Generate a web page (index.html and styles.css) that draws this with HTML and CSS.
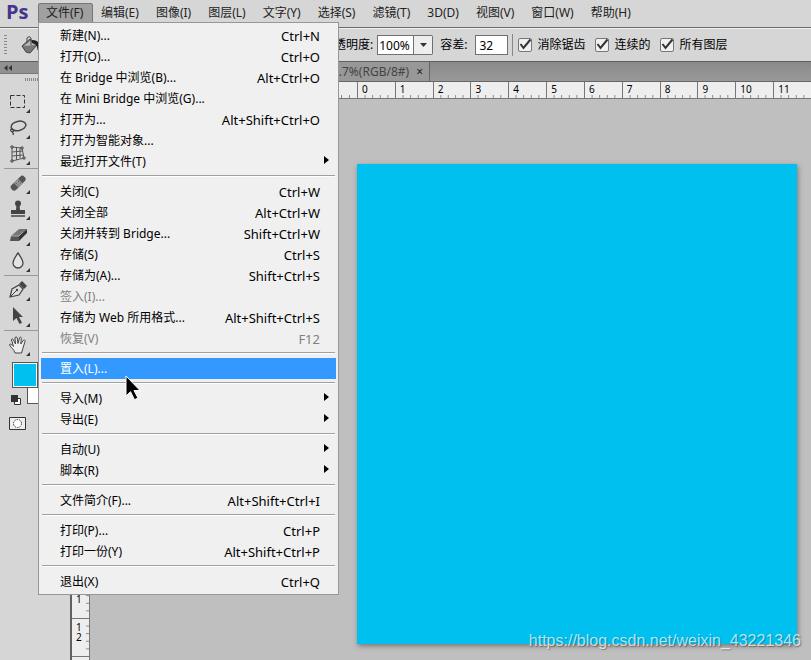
FILE: index.html
```html
<!DOCTYPE html>
<html lang="zh-CN">
<head>
<meta charset="utf-8">
<title>Ps</title>
<link rel="stylesheet" href="styles.css">
</head>
<body>
<div class="app">
  <header class="menubar">
    <span class="logo">Ps</span>
    <nav class="menus">
      <div class="menu-root">
        <button class="menu-title open">文件(F)</button>
        <div class="dropdown">
          <button class="item"><span>新建(N)...</span><kbd>Ctrl+N</kbd></button>
          <button class="item"><span>打开(O)...</span><kbd>Ctrl+O</kbd></button>
          <button class="item"><span>在 Bridge 中浏览(B)...</span><kbd>Alt+Ctrl+O</kbd></button>
          <button class="item"><span>在 Mini Bridge 中浏览(G)...</span></button>
          <button class="item"><span>打开为...</span><kbd>Alt+Shift+Ctrl+O</kbd></button>
          <button class="item"><span>打开为智能对象...</span></button>
          <button class="item sub"><span>最近打开文件(T)</span></button>
          <hr>
          <button class="item"><span>关闭(C)</span><kbd>Ctrl+W</kbd></button>
          <button class="item"><span>关闭全部</span><kbd>Alt+Ctrl+W</kbd></button>
          <button class="item"><span>关闭并转到 Bridge...</span><kbd>Shift+Ctrl+W</kbd></button>
          <button class="item"><span>存储(S)</span><kbd>Ctrl+S</kbd></button>
          <button class="item"><span>存储为(A)...</span><kbd>Shift+Ctrl+S</kbd></button>
          <button class="item" disabled><span>签入(I)...</span></button>
          <button class="item"><span>存储为 Web 所用格式...</span><kbd>Alt+Shift+Ctrl+S</kbd></button>
          <button class="item" disabled><span>恢复(V)</span><kbd>F12</kbd></button>
          <hr>
          <button class="item active"><span>置入(L)...</span>
            <svg class="cursor" width="16" height="26" viewBox="0 0 16 26"><path d="M1 1v20l4.500-4.300 4 8 3.500-1.700-4-7.500h6z" fill="#000" stroke="#fff" stroke-width="1"/></svg>
          </button>
          <hr>
          <button class="item sub"><span>导入(M)</span></button>
          <button class="item sub"><span>导出(E)</span></button>
          <hr>
          <button class="item sub"><span>自动(U)</span></button>
          <button class="item sub"><span>脚本(R)</span></button>
          <hr>
          <button class="item"><span>文件简介(F)...</span><kbd>Alt+Shift+Ctrl+I</kbd></button>
          <hr>
          <button class="item"><span>打印(P)...</span><kbd>Ctrl+P</kbd></button>
          <button class="item"><span>打印一份(Y)</span><kbd>Alt+Shift+Ctrl+P</kbd></button>
          <hr>
          <button class="item"><span>退出(X)</span><kbd>Ctrl+Q</kbd></button>
        </div>
      </div>
      <button class="menu-title">编辑(E)</button>
      <button class="menu-title">图像(I)</button>
      <button class="menu-title">图层(L)</button>
      <button class="menu-title">文字(Y)</button>
      <button class="menu-title">选择(S)</button>
      <button class="menu-title">滤镜(T)</button>
      <button class="menu-title">3D(D)</button>
      <button class="menu-title">视图(V)</button>
      <button class="menu-title">窗口(W)</button>
      <button class="menu-title">帮助(H)</button>
    </nav>
  </header>

  <div class="options">
    <div class="current-tool">
      <span class="grip-v"></span>
      <svg width="20" height="20" viewBox="0 0 20 20"><path d="M1 11 9 4l7 6-7 8-4-1z" fill="#777" stroke="#444"/><path d="M3 11l6-5 5 4z" fill="#bbb"/><path d="M6 8V3q2-3 4 0v7" fill="none" stroke="#444"/><path d="M11 5q6 0 7 4 1 4 0 7-2-1-2-4 0-3-5-4z" fill="#222"/></svg>
    </div>
    <label for="opacity">透明度:</label>
    <div class="combo"><input id="opacity" type="text" value="100%"><button aria-label="透明度"><svg width="7" height="4" viewBox="0 0 7 4"><path d="M0 0h7L3.500 4z" fill="#333"/></svg></button></div>
    <label for="tolerance">容差:</label>
    <input id="tolerance" class="number" type="text" value="32">
    <span class="divider"></span>
    <label class="check"><span class="box"><input type="checkbox" checked><svg width="16" height="16" viewBox="0 0 16 16"><path d="M3.500 7l3 4L13.500 2.500" fill="none" stroke="#333" stroke-width="2"/></svg></span>消除锯齿</label>
    <label class="check"><span class="box"><input type="checkbox" checked><svg width="16" height="16" viewBox="0 0 16 16"><path d="M3.500 7l3 4L13.500 2.500" fill="none" stroke="#333" stroke-width="2"/></svg></span>连续的</label>
    <label class="check"><span class="box"><input type="checkbox" checked><svg width="16" height="16" viewBox="0 0 16 16"><path d="M3.500 7l3 4L13.500 2.500" fill="none" stroke="#333" stroke-width="2"/></svg></span>所有图层</label>
  </div>

  <div class="workspace">
    <aside class="tools">
      <div class="tools-head"><svg width="8" height="6" viewBox="0 0 8 6"><path d="M3.500 0v6L0 3zM8 0v6L4.500 3z" fill="#333"/></svg></div>
      <div class="grip-h"></div>
      <div class="group">
        <button class="tool" aria-label="选框"><svg width="20" height="20" viewBox="0 0 20 20"><rect x="2.500" y="3.500" width="14" height="12" fill="none" stroke="#333" stroke-dasharray="4 2"/></svg></button>
        <button class="tool" aria-label="套索"><svg width="20" height="20" viewBox="0 0 20 20"><ellipse cx="10.500" cy="8" rx="7.500" ry="4.600" transform="rotate(-12 10 8)" fill="none" stroke="#444" stroke-width="1.500"/><path d="M3 11q-1 3 2 2.500 2-1-1-2.500-1 0-1 1M4 14q2 1 1 3" fill="none" stroke="#444" stroke-width="1.300"/></svg></button>
        <button class="tool" aria-label="透视裁剪"><svg width="20" height="20" viewBox="0 0 20 20"><path d="M4 3v14l12-3-2-10zM8.500 3v13M12 4v10M4 8l11-1M4 12l11-1" fill="none" stroke="#555"/><path d="M3 2h2v2H3zM13 3h2v2h-2zM3 16h2v2H3zM15 13h2v2h-2z" fill="#ddd" stroke="#444"/></svg></button>
      </div>
      <div class="group">
        <button class="tool" aria-label="修复画笔"><svg width="20" height="20" viewBox="0 0 20 20"><g transform="rotate(-45 10 10)"><rect x="1" y="7" width="18" height="6.500" rx="3" fill="#555"/><rect x="7" y="7" width="6" height="6.500" fill="#999"/><path d="M8 9h1M11 9h1M8 11.500h1M11 11.500h1" stroke="#444"/></g></svg></button>
        <button class="tool" aria-label="图章"><svg width="20" height="20" viewBox="0 0 20 20"><circle cx="10" cy="4.500" r="3" fill="#444"/><path d="M8.500 6h3l.5 5h5v4H3v-4h5z" fill="#444"/><path d="M3 17h14" stroke="#444" stroke-width="1.500"/></svg></button>
        <button class="tool" aria-label="橡皮擦"><svg width="20" height="20" viewBox="0 0 20 20"><path d="M3 11 11 4h8l-8 7z" fill="#777"/><path d="M3 11h8v5H2z" fill="#555"/><path d="M11 11l8-7v4l-8 8z" fill="#333"/><path d="M3 11h8l4-4" fill="none" stroke="#aaa"/></svg></button>
        <button class="tool" aria-label="模糊"><svg width="20" height="20" viewBox="0 0 20 20"><path d="M10 2q5 7 5 10a5 5 0 0 1-10 0q0-3 5-10z" fill="#e4e4e4" stroke="#444" stroke-width="1.300"/></svg></button>
      </div>
      <div class="group">
        <button class="tool" aria-label="钢笔"><svg width="20" height="20" viewBox="0 0 20 20"><path d="M2 17 4 9l7-4 4 4-4 6z" fill="#ddd" stroke="#444" stroke-width="1.200"/><path d="M11 4l3-3 5 5-3 3z" fill="#444"/><path d="M2 17l6-6" stroke="#444"/><circle cx="9" cy="10" r="1.200" fill="#444"/></svg></button>
        <button class="tool" aria-label="路径选择"><svg width="20" height="20" viewBox="0 0 20 20"><path d="M5 1v14l3.500-3 3 6 2.500-1.300-3-5.700H15z" fill="#444"/></svg></button>
      </div>
      <div class="group last">
        <button class="tool" aria-label="抓手"><svg width="20" height="20" viewBox="0 0 20 20"><path d="M7 18C6 14 3 13 1.500 10c0-1.500 2-1 4 1.500L3.500 5c0-1.500 1.500-1.500 2 0L7.500 9 7 3c0-1.500 2-1.500 2.200 0L10 8.500 11.500 3c.5-1.500 2-1 1.800.5L12.800 9l2.400-3.500c1-1.200 2.300-.5 1.800 1L15 13l-1.500 5z" fill="#eee" stroke="#444"/></svg></button>
      </div>
      <div class="swatches"><span class="bg-color"></span><span class="fg-color"></span></div>
      <div class="extras">
        <svg width="10" height="10" viewBox="0 0 10 10"><path d="M3.500 3.500h6v6h-6z" fill="#fff" stroke="#333"/><path d="M0 0h7v7H0z" fill="#333"/></svg>
        <svg width="17" height="13" viewBox="0 0 17 13"><path d="M.5.5h16v12H.5z" fill="#eee" stroke="#333"/><circle cx="8.500" cy="6.500" r="4" fill="#fff" stroke="#333" stroke-dasharray="1.500 1"/></svg>
      </div>
    </aside>

    <main class="document">
      <div class="tabs"><div class="tab"><span>.7%(RGB/8#)</span><button aria-label="关闭">×</button></div></div>
      <div class="ruler-x">
        <span class="lead"></span>
        <div class="units"><span>0</span><span>1</span><span>2</span><span>3</span><span>4</span><span>5</span><span>6</span><span>7</span><span>8</span><span>9</span><span>10</span><span>11</span></div>
      </div>
      <div class="stage">
        <div class="ruler-y">
          <span></span><span></span><span></span><span></span><span></span><span></span><span></span><span></span><span></span><span></span><span></span><span><br>1</span><span>1<br>2</span><span></span>
        </div>
        <div class="canvas"><div class="artboard"></div></div>
      </div>
    </main>
  </div>
  <span class="watermark">https://blog.csdn.net/weixin_43221346</span>
</div>
</body>
</html>
```

FILE: styles.css
```css
* { box-sizing: border-box; }

body {
  margin: 0;
  font: 12px/16px "Noto Sans", "Noto Sans CJK SC", sans-serif;
  color: #000;
}

button, input, kbd { font: inherit; color: inherit; }

button {
  padding: 0;
  border: 0;
  background: none;
  text-align: left;
  white-space: nowrap;
}

svg { display: block; flex: none; }

.app {
  position: relative;
  display: flex;
  flex-direction: column;
  height: 100vh;
  overflow: hidden;
  background: #d6d6d6;
}

/* Menu bar */
.menubar {
  display: flex;
  height: 28px;
  flex: none;
  border-bottom: 1px solid #6c6c6c;
}

.logo {
  width: 38px;
  padding-left: 6px;
  font: bold 20px/24px "Open Sans", sans-serif;
  color: #45358c;
}

.menus { display: flex; align-items: flex-start; padding-top: 3px; }
.menu-root { position: relative; }

.menu-title {
  display: block;
  height: 20px;
  padding: 0 9px 0 8px;
  color: #222;
}

.menu-title.open {
  width: 55px;
  border: 1px solid #777;
  border-radius: 2px 2px 0 0;
  padding: 0 7px;
  background: #a0a0a0;
}

.dropdown {
  position: absolute;
  z-index: 10;
  top: 19px;
  left: 0;
  width: 301px;
  padding: 2px;
  border: 1px solid #979797;
  background: #f0f0f0;
}

.item {
  position: relative;
  display: flex;
  justify-content: space-between;
  align-items: center;
  width: 100%;
  height: 21px;
  padding: 0 16px 0 19px;
}

.item kbd { font-size: 13px; }
.item:disabled { color: #808080; }
.item.active { background: #3399ff; color: #fff; }

.item.sub::after {
  content: "";
  margin-right: -9px;
  margin-bottom: 4px;
  border: 4px solid transparent;
  border-left: 5px solid #000;
  border-right: 0;
}

.cursor { position: absolute; z-index: 2; left: 84px; top: 17px; }

.dropdown hr {
  height: 2px;
  margin: 3px 1px 4px;
  border: 0;
  border-top: 1px solid #a0a0a0;
  background: #fff;
}

/* Tool options */
.options {
  display: flex;
  align-items: center;
  flex: none;
  height: 34px;
  border-top: 1px solid #eee;
  border-bottom: 1px solid #606060;
  white-space: nowrap;
}

.current-tool {
  display: flex;
  align-items: center;
  gap: 14px;
  width: 334px;
  padding-left: 4px;
}

.grip-v {
  width: 3px;
  height: 20px;
  background: repeating-linear-gradient(#888 0 1px, transparent 1px 3px);
}

.combo { display: flex; margin: 0 7px 0 4px; }

.combo input, .number {
  height: 20px;
  padding: 0 3px;
  border: 1px solid #707070;
  background: #fff;
}

.combo input { width: 37px; padding: 0 1px; }

.combo button {
  display: grid;
  place-items: center;
  width: 19px;
  height: 20px;
  border: 1px solid #707070;
  border-left: 0;
  border-radius: 0 2px 2px 0;
  background: #eee;
}

.number { width: 33px; margin-left: 8px; }
.divider { width: 1px; height: 22px; margin: 0 4px; background: #888; }
.check { display: flex; align-items: center; gap: 4px; margin-right: 9px; }
.box { display: grid; }
.box > * { grid-area: 1 / 1; }

.box input {
  appearance: none;
  width: 14px;
  height: 14px;
  margin: 1px;
  border: 1px solid #777;
  border-radius: 2px;
  background: #f0f0f0;
}

.box svg { pointer-events: none; z-index: 1; }

/* Tool panel */
.workspace { display: flex; flex: 1; min-height: 0; }

.tools {
  flex: none;
  width: 72px;
  border-right: 2px solid #606060;
}

.tools-head {
  height: 12px;
  padding: 3px 4px;
  border-bottom: 1px solid #777;
  background: #909090;
}

.grip-h {
  height: 3px;
  margin: 4px 25px 8px;
  background: repeating-linear-gradient(90deg, #888 0 1px, transparent 1px 2px);
}

.group { border-bottom: 1px solid #999; margin-left: 4px; padding-bottom: 1px; }
.group + .group { padding-top: 1px; }
.group.last { border-bottom: 0; }

.tool {
  position: relative;
  display: block;
  width: 28px;
  height: 26px;
  padding: 2px 4px;
}

.tool::after {
  content: "";
  position: absolute;
  right: 2px;
  bottom: 2px;
  border: 2px solid #333;
  border-top-color: transparent;
  border-left-color: transparent;
}

.swatches { display: grid; margin: 3px 0 0 12px; }
.swatches span { grid-area: 1 / 1; width: 26px; height: 26px; border: 1px solid #555; }
.swatches .bg-color { margin: 16px 0 0 15px; background: #fff; }
.swatches .fg-color { background: #00c0f0; box-shadow: inset 0 0 0 1px #fff; }

.extras {
  display: flex;
  flex-direction: column;
  gap: 12px;
  margin-top: -9px;
  padding-left: 9px;
}

.extras svg:first-child { margin-left: 2px; }

/* Document */
.document { display: flex; flex-direction: column; flex: 1; min-width: 0; }

.tabs {
  display: flex;
  height: 20px;
  flex: none;
  border-bottom: 1px solid #666;
  background: linear-gradient(#8a8a8a, #999);
}

.tab {
  display: flex;
  justify-content: flex-end;
  align-items: center;
  gap: 7px;
  width: 358px;
  padding-right: 6px;
  border-right: 1px solid #666;
  background: #989898;
  color: #444;
}

.tab button { color: #222; }

.ruler-x {
  display: flex;
  flex: none;
  height: 17px;
  border-bottom: 1px solid #777;
  background: #eee;
  font-size: 10px;
  line-height: 14px;
}

.lead {
  flex: none;
  width: 285px;
  background: repeating-linear-gradient(270deg, transparent 0 7px, #888 7px 8px) bottom / 100% 3px no-repeat;
}

.units { display: grid; grid-template-columns: repeat(12, 1fr); flex: 1; }

.units span {
  padding-left: 4px;
  border-left: 1px solid #777;
  background: linear-gradient(90deg, #888 1px, transparent 0) left bottom / 20% 3px repeat-x border-box;
}

.stage { display: flex; flex: 1; min-height: 0; }

.ruler-y {
  flex: none;
  width: 18px;
  padding-top: 63px;
  overflow: hidden;
  border-right: 1px solid #777;
  background: #eee;
  font-size: 10px;
  line-height: 10px;
}

.ruler-y span {
  display: block;
  height: 38px;
  padding: 3px 0 0 4px;
  border-top: 1px solid #777;
  background: linear-gradient(#888 1px, transparent 0) right top / 3px 20% repeat-y border-box;
}

.canvas {
  display: flex;
  flex: 1;
  padding: 65px 14px 16px 267px;
  background: #bfbfbf;
}

.artboard {
  flex: 1;
  background: #00c0f0;
  box-shadow: 1px 2px 5px #777;
}

.watermark {
  position: absolute;
  right: 10px;
  bottom: 9px;
  font: 16px/20px "Liberation Sans", sans-serif;
  color: rgba(255, 255, 255, .7);
  text-shadow: 1px 1px 1px rgba(0, 0, 0, .3);
}
```
